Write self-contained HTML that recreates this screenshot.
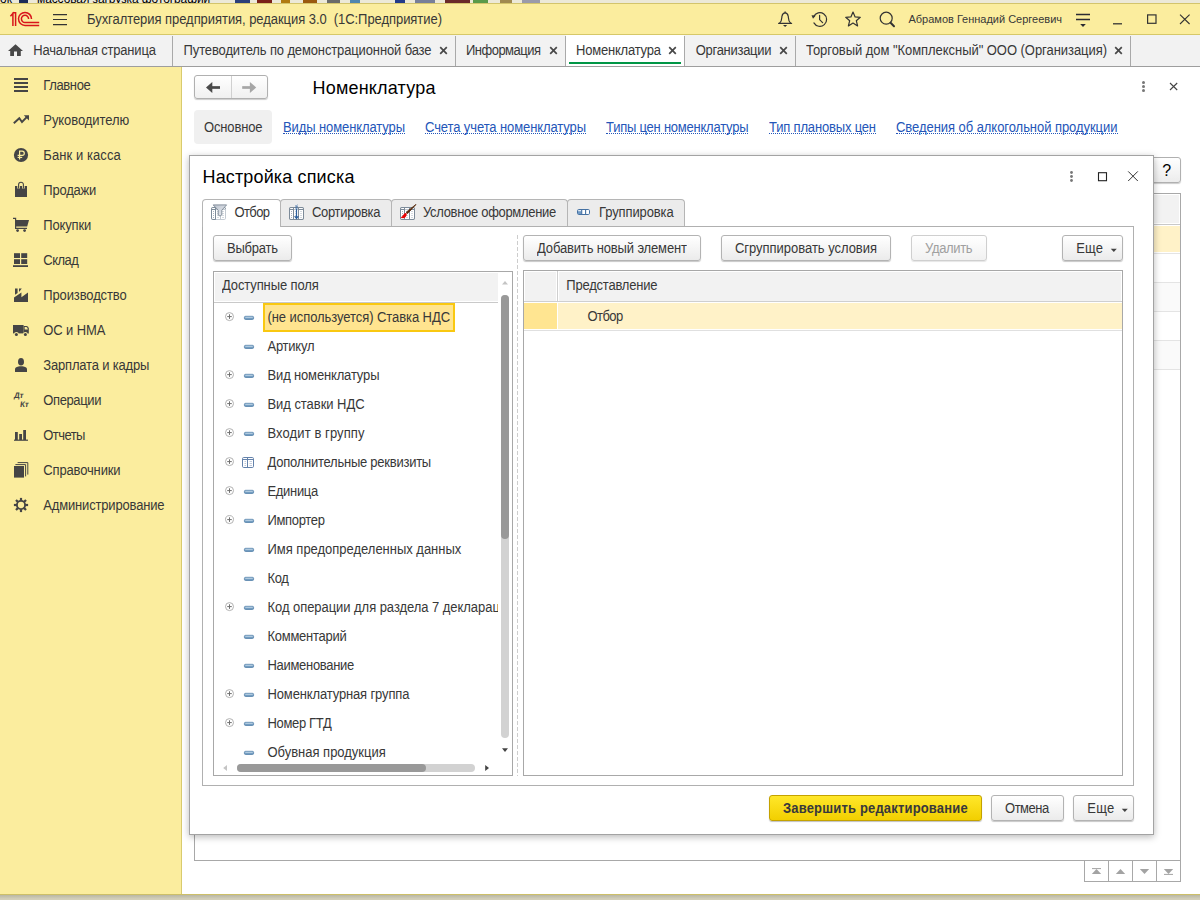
<!DOCTYPE html>
<html lang="ru">
<head>
<meta charset="utf-8">
<title>Номенклатура</title>
<style>
*{box-sizing:border-box;margin:0;padding:0}
html,body{width:1200px;height:900px;overflow:hidden;background:#fff}
body{font-family:"Liberation Sans",sans-serif;font-size:13px;color:#333;position:relative}
.abs{position:absolute}
svg.abs{overflow:visible}
.t{position:absolute;white-space:pre}
#os-top{left:0;top:0;width:1200px;height:3px;background:#ece9d8;overflow:hidden}
#os-top span{position:absolute;top:-8px;font-size:12px;line-height:14px;color:#000;white-space:nowrap}
#os-top i{position:absolute;top:0;height:3px}
#titlebar{left:0;top:3px;width:1200px;height:32px;background:#fbed9e;border-top:1px solid #d3c46c;border-bottom:1px solid #d6c868}
#tabbar{left:0;top:35px;width:1200px;height:32px;background:#f2f2f2;border-bottom:1px solid #9e9e9e}
.tsep{position:absolute;top:36px;width:1px;height:30px;background:#a9a9a9}
#sidebar{left:0;top:67px;width:182px;height:828px;background:#fbed9e;border-right:1px solid #d9cb6e}
#os-bottom{left:0;top:894px;width:1200px;height:6px;background:linear-gradient(#b9b7a4,#d3cfba 80%);border-top:1px solid #cdbf68}
</style>
</head>
<body>
<div id="os-top" class="abs"><span style="left:0px">ок</span><span style="left:37px;letter-spacing:-0.1px">массовая загрузка фотографий</span><i style="left:19px;width:9px;background:#1c2c58"></i><i style="left:235px;width:15px;background:#2b3f7a"></i><i style="left:257px;width:15px;background:#7a2018"></i><i style="left:281px;width:9px;background:#b07a10"></i><i style="left:303px;width:14px;background:#9a5a10"></i><i style="left:327px;width:13px;background:#6a6a6a"></i><i style="left:350px;width:10px;background:#4f86b0"></i><i style="left:395px;width:10px;background:#223a8a"></i><i style="left:415px;width:20px;background:#777f99"></i><i style="left:445px;width:25px;background:#6a2a2a"></i><i style="left:473px;width:15px;background:#5a9a4a"></i><i style="left:500px;width:12px;background:#a08a50"></i><i style="left:522px;width:18px;background:#9a9aaa"></i></div>
<div id="titlebar" class="abs"></div>
<svg class="abs" style="left:9px;top:10px;" width="32" height="18" viewBox="0 0 32 18"><g fill="none" stroke="#d8151b" stroke-width="1.5" stroke-linecap="butt"><path d="M1.4 6.2 L3.9 3.4 L3.9 16"/><path d="M3.6 2.75 L6.6 2.75 L6.6 16"/><path d="M22.5 9 A6.5 6.5 0 1 0 16 15.4 L30.2 15.4"/><path d="M19.6 9 A3.6 3.6 0 1 0 16 12.5 L30.2 12.5"/></g></svg>
<svg class="abs" style="left:52px;top:12px;" width="16" height="15" viewBox="0 0 16 15"><g stroke="#333" stroke-width="1.2"><path d="M1 2.6H15M1 7.5H15M1 12.6H15"/></g></svg>
<div class="t" style="left:87.00px;top:11.80px;font-size:13px;line-height:16px;letter-spacing:-0.054px;color:#383838;transform:scaleY(1.06);transform-origin:0 12.5px;">Бухгалтерия предприятия, редакция 3.0  (1С:Предприятие)</div>
<svg class="abs" style="left:776px;top:10px;" width="18" height="18" viewBox="0 0 18 18"><g fill="none" stroke="#333" stroke-width="1.2" stroke-linejoin="round" stroke-linecap="round"><path d="M2.6 13.3 H15.6"/><path d="M3.7 13 C6.3 10.8 5.6 7.6 6 6 C6.5 3.7 7.6 2.8 9.1 2.8 C10.6 2.8 11.7 3.7 12.2 6 C12.6 7.6 11.9 10.8 14.5 13"/><path d="M9.1 2.6 V1.9"/></g><path d="M7 15 H11.2 L9.1 17 Z" fill="#333"/></svg>
<svg class="abs" style="left:810px;top:10px;" width="18" height="18" viewBox="0 0 18 18"><g fill="none" stroke="#333" stroke-width="1.2" stroke-linejoin="round" stroke-linecap="round"><path d="M3.64 6.63 A6.8 6.8 0 1 1 3.91 12.9"/><path d="M9.6 5.4V9.6L12.6 12.6"/></g><path d="M1.5 5.2 L5.8 5.6 L3 8.8 Z" fill="#333"/></svg>
<svg class="abs" style="left:844px;top:10px;" width="18" height="18" viewBox="0 0 18 18"><g fill="none" stroke="#333" stroke-width="1.2" stroke-linejoin="round" stroke-linecap="round"><path d="M9 2 L11.1 6.9 L16.3 7.3 L12.3 10.7 L13.6 15.9 L9 13.1 L4.4 15.9 L5.7 10.7 L1.7 7.3 L6.9 6.9 Z"/></g></svg>
<svg class="abs" style="left:878px;top:10px;" width="18" height="18" viewBox="0 0 18 18"><g fill="none" stroke="#333" stroke-width="1.2" stroke-linejoin="round" stroke-linecap="round"><circle cx="8.2" cy="8.2" r="6"/><path d="M12.6 12.8 L16 16.2" stroke-width="2"/></g></svg>
<div class="t" style="left:908.50px;top:12.00px;font-size:11px;line-height:14px;letter-spacing:-0.008px;color:#383838;">Абрамов Геннадий Сергеевич</div>
<svg class="abs" style="left:1075px;top:11px;" width="16" height="18" viewBox="0 0 16 18"><g stroke="#2b2b33" stroke-width="1.3"><path d="M1 3.5H15M1 8.5H15"/></g><path d="M5.2 13 H10.8 L8 16 Z" fill="#2b2b33"/></svg>
<svg class="abs" style="left:1112px;top:11px;" width="12" height="16" viewBox="0 0 12 16"><path d="M1 12.8H10" stroke="#333" stroke-width="1.3"/></svg>
<svg class="abs" style="left:1146px;top:13px;" width="12" height="12" viewBox="0 0 12 12"><rect x="1.6" y="1.9" width="8.4" height="8.4" fill="none" stroke="#333" stroke-width="1.2"/></svg>
<svg class="abs" style="left:1179px;top:13px;" width="12" height="12" viewBox="0 0 12 12"><path d="M1 1.6 L10.6 11 M10.6 1.6 L1 11" stroke="#333" stroke-width="1.1"/></svg>
<div id="tabbar" class="abs"></div>
<div class="abs" style="left:566px;top:35px;width:118px;height:31px;background:#fff"></div>
<div class="abs" style="left:569px;top:62px;width:112px;height:2px;background:#009646"></div>
<div class="tsep" style="left:172px"></div>
<div class="tsep" style="left:455px"></div>
<div class="tsep" style="left:565px"></div>
<div class="tsep" style="left:684px"></div>
<div class="tsep" style="left:795px"></div>
<div class="tsep" style="left:1130px"></div>
<svg class="abs" style="left:7px;top:43px;" width="17" height="14" viewBox="0 0 17 14"><path d="M8.5 1.2 L1 8 H3.2 V13 H7 V8.4 H10 V13 H13.8 V8 H16 Z" fill="#484848"/></svg>
<div class="t" style="left:33.30px;top:42.80px;font-size:13px;line-height:16px;letter-spacing:-0.188px;color:#383838;transform:scaleY(1.06);transform-origin:0 12.5px;">Начальная страница</div>
<div class="t" style="left:183.60px;top:42.80px;font-size:13px;line-height:16px;letter-spacing:-0.131px;color:#383838;transform:scaleY(1.06);transform-origin:0 12.5px;">Путеводитель по демонстрационной базе</div>
<svg class="abs" style="left:439.4px;top:45.5px;" width="9" height="9" viewBox="0 0 9 9"><path d="M1.2 1.2 L7.8 7.8 M7.8 1.2 L1.2 7.8" stroke="#484848" stroke-width="1.7"/></svg>
<div class="t" style="left:466.00px;top:42.80px;font-size:13px;line-height:16px;letter-spacing:-0.511px;color:#383838;transform:scaleY(1.06);transform-origin:0 12.5px;">Информация</div>
<svg class="abs" style="left:549px;top:45.5px;" width="9" height="9" viewBox="0 0 9 9"><path d="M1.2 1.2 L7.8 7.8 M7.8 1.2 L1.2 7.8" stroke="#484848" stroke-width="1.7"/></svg>
<div class="t" style="left:576.00px;top:42.80px;font-size:13px;line-height:16px;letter-spacing:-0.209px;color:#383838;transform:scaleY(1.06);transform-origin:0 12.5px;">Номенклатура</div>
<svg class="abs" style="left:668px;top:45.5px;" width="9" height="9" viewBox="0 0 9 9"><path d="M1.2 1.2 L7.8 7.8 M7.8 1.2 L1.2 7.8" stroke="#484848" stroke-width="1.7"/></svg>
<div class="t" style="left:695.80px;top:42.80px;font-size:13px;line-height:16px;letter-spacing:-0.300px;color:#383838;transform:scaleY(1.06);transform-origin:0 12.5px;">Организации</div>
<svg class="abs" style="left:779.3px;top:45.5px;" width="9" height="9" viewBox="0 0 9 9"><path d="M1.2 1.2 L7.8 7.8 M7.8 1.2 L1.2 7.8" stroke="#484848" stroke-width="1.7"/></svg>
<div class="t" style="left:806.00px;top:42.80px;font-size:13px;line-height:16px;letter-spacing:-0.049px;color:#383838;transform:scaleY(1.06);transform-origin:0 12.5px;">Торговый дом "Комплексный" ООО (Организация)</div>
<svg class="abs" style="left:1114.3px;top:45.5px;" width="9" height="9" viewBox="0 0 9 9"><path d="M1.2 1.2 L7.8 7.8 M7.8 1.2 L1.2 7.8" stroke="#484848" stroke-width="1.7"/></svg>
<div id="sidebar" class="abs"></div>
<div class="t" style="left:43.30px;top:77.80px;font-size:13px;line-height:16px;letter-spacing:-0.367px;color:#383838;transform:scaleY(1.06);transform-origin:0 12.5px;">Главное</div>
<div class="t" style="left:43.30px;top:112.80px;font-size:13px;line-height:16px;letter-spacing:-0.073px;color:#383838;transform:scaleY(1.06);transform-origin:0 12.5px;">Руководителю</div>
<div class="t" style="left:43.30px;top:147.80px;font-size:13px;line-height:16px;letter-spacing:0.082px;color:#383838;transform:scaleY(1.06);transform-origin:0 12.5px;">Банк и касса</div>
<div class="t" style="left:43.30px;top:182.80px;font-size:13px;line-height:16px;letter-spacing:-0.217px;color:#383838;transform:scaleY(1.06);transform-origin:0 12.5px;">Продажи</div>
<div class="t" style="left:43.30px;top:217.80px;font-size:13px;line-height:16px;letter-spacing:-0.150px;color:#383838;transform:scaleY(1.06);transform-origin:0 12.5px;">Покупки</div>
<div class="t" style="left:43.30px;top:252.80px;font-size:13px;line-height:16px;letter-spacing:-0.525px;color:#383838;transform:scaleY(1.06);transform-origin:0 12.5px;">Склад</div>
<div class="t" style="left:43.30px;top:287.80px;font-size:13px;line-height:16px;letter-spacing:-0.127px;color:#383838;transform:scaleY(1.06);transform-origin:0 12.5px;">Производство</div>
<div class="t" style="left:43.30px;top:322.80px;font-size:13px;line-height:16px;letter-spacing:-0.100px;color:#383838;transform:scaleY(1.06);transform-origin:0 12.5px;">ОС и НМА</div>
<div class="t" style="left:43.30px;top:357.80px;font-size:13px;line-height:16px;letter-spacing:-0.180px;color:#383838;transform:scaleY(1.06);transform-origin:0 12.5px;">Зарплата и кадры</div>
<div class="t" style="left:43.30px;top:392.80px;font-size:13px;line-height:16px;letter-spacing:-0.386px;color:#383838;transform:scaleY(1.06);transform-origin:0 12.5px;">Операции</div>
<div class="t" style="left:43.30px;top:427.80px;font-size:13px;line-height:16px;letter-spacing:-0.560px;color:#383838;transform:scaleY(1.06);transform-origin:0 12.5px;">Отчеты</div>
<div class="t" style="left:43.30px;top:462.80px;font-size:13px;line-height:16px;letter-spacing:-0.150px;color:#383838;transform:scaleY(1.06);transform-origin:0 12.5px;">Справочники</div>
<div class="t" style="left:43.30px;top:497.80px;font-size:13px;line-height:16px;letter-spacing:-0.169px;color:#383838;transform:scaleY(1.06);transform-origin:0 12.5px;">Администрирование</div>
<svg class="abs" style="left:11px;top:75px;" width="20" height="20" viewBox="0 0 20 20"><g fill="#454545"><rect x="3" y="3" width="14" height="2"/><rect x="3" y="7" width="14" height="2"/><rect x="3" y="11" width="14" height="2"/><rect x="3" y="15" width="14" height="2"/></g></svg>
<svg class="abs" style="left:11px;top:110px;" width="20" height="20" viewBox="0 0 20 20"><path d="M2.8 13.3 L8.3 8.2 L11 12 L16 6.8" fill="none" stroke="#454545" stroke-width="1.9"/><path d="M12.8 5.3 H18 V10.4 Z" fill="#454545"/></svg>
<svg class="abs" style="left:11px;top:145px;" width="20" height="20" viewBox="0 0 20 20"><circle cx="10" cy="10" r="7.1" fill="#454545"/><g fill="none" stroke="#fbed9e" stroke-width="1.2"><path d="M8.6 14.6 V6.2 H11.2 A2.1 2.1 0 0 1 11.2 10.4 H6.6"/><path d="M6.6 12.4 H11.2"/></g></svg>
<svg class="abs" style="left:11px;top:180px;" width="20" height="20" viewBox="0 0 20 20"><path d="M4 6 H16 V17 H4 Z" fill="#454545"/><path d="M7.6 8.6 V4.6 A2.4 2.4 0 0 1 12.4 4.6 V8.6" fill="none" stroke="#fbed9e" stroke-width="2.6"/><path d="M7.6 8.4 V4.6 A2.4 2.4 0 0 1 12.4 4.6 V8.4" fill="none" stroke="#454545" stroke-width="1.1"/></svg>
<svg class="abs" style="left:11px;top:215px;" width="20" height="20" viewBox="0 0 20 20"><path d="M4.4 5 H18 L16.2 11.6 H4.4 Z" fill="#454545"/><path d="M2 3.4 H4.6 V13.4 H16" fill="none" stroke="#454545" stroke-width="1.2"/><circle cx="6.6" cy="15.6" r="1.4" fill="#454545"/><circle cx="13.6" cy="15.6" r="1.4" fill="#454545"/></svg>
<svg class="abs" style="left:11px;top:250px;" width="20" height="20" viewBox="0 0 20 20"><g fill="#454545"><rect x="3" y="3.2" width="6" height="4.8"/><rect x="10.2" y="3.2" width="6" height="4.8"/><rect x="3" y="9.2" width="6" height="4.8"/><rect x="10.2" y="9.2" width="6" height="4.8"/><rect x="2" y="15.2" width="15" height="1.8"/></g></svg>
<svg class="abs" style="left:11px;top:285px;" width="20" height="20" viewBox="0 0 20 20"><path d="M3 17 V12.4 L10.4 7.6 V12.2 L17 7.6 V17 Z" fill="#454545"/><path d="M4 3.4 H6.6 V8 L4 9.8 Z" fill="#454545"/><path d="M8 3.4 H10.8 L8 7 Z" fill="#454545"/></svg>
<svg class="abs" style="left:11px;top:320px;" width="20" height="20" viewBox="0 0 20 20"><path d="M2 5 H12.6 V13.4 H2 Z" fill="#454545"/><path d="M12.6 6 H15.6 Q17.6 6 17.8 8.6 V13.4 H12.6 Z" fill="#454545"/><path d="M13.6 7 H15.4 Q16.6 7.2 16.8 9.4 H13.6 Z" fill="#fbed9e"/><circle cx="5.4" cy="14.2" r="2.3" fill="#fbed9e"/><circle cx="14.4" cy="14.2" r="2.3" fill="#fbed9e"/><circle cx="5.4" cy="14.4" r="1.5" fill="#454545"/><circle cx="14.4" cy="14.4" r="1.5" fill="#454545"/></svg>
<svg class="abs" style="left:11px;top:355px;" width="20" height="20" viewBox="0 0 20 20"><ellipse cx="10" cy="6.7" rx="3" ry="3.8" fill="#454545"/><path d="M4 17 V14.4 Q4 12.2 7.4 11.6 L8.6 11.2 H11.4 L12.6 11.6 Q16 12.2 16 14.4 V17 Z" fill="#454545"/></svg>
<svg class="abs" style="left:11px;top:425px;" width="20" height="20" viewBox="0 0 20 20"><g fill="#454545"><rect x="4" y="7" width="2.8" height="8"/><rect x="8.2" y="9" width="2.8" height="6"/><rect x="12.2" y="5" width="2.8" height="10"/><rect x="3" y="14.6" width="14" height="1.2"/></g></svg>
<svg class="abs" style="left:11px;top:460px;" width="20" height="20" viewBox="0 0 20 20"><rect x="3" y="6" width="10" height="11.6" fill="#454545"/><path d="M4.4 4.6 H14.6 V16.4 M6.6 2.6 H16.8 V14.6" fill="none" stroke="#454545" stroke-width="1"/></svg>
<svg class="abs" style="left:11px;top:495px;" width="20" height="20" viewBox="0 0 20 20"><g fill="#454545"><rect x="8.9" y="2.9" width="2.2" height="3" transform="rotate(0 10 10)"/><rect x="8.9" y="2.9" width="2.2" height="3" transform="rotate(45 10 10)"/><rect x="8.9" y="2.9" width="2.2" height="3" transform="rotate(90 10 10)"/><rect x="8.9" y="2.9" width="2.2" height="3" transform="rotate(135 10 10)"/><rect x="8.9" y="2.9" width="2.2" height="3" transform="rotate(180 10 10)"/><rect x="8.9" y="2.9" width="2.2" height="3" transform="rotate(225 10 10)"/><rect x="8.9" y="2.9" width="2.2" height="3" transform="rotate(270 10 10)"/><rect x="8.9" y="2.9" width="2.2" height="3" transform="rotate(315 10 10)"/></g><circle cx="10" cy="10" r="4.1" fill="none" stroke="#454545" stroke-width="1.9"/></svg>
<div class="t" style="left:13.5px;top:391px;font-size:8px;line-height:10px;font-weight:bold;color:#454545;letter-spacing:-0.1px;transform:skewX(-8deg)">Дт</div>
<div class="t" style="left:19.7px;top:400px;font-size:8px;line-height:10px;font-weight:bold;color:#454545;letter-spacing:-0.1px;transform:skewX(-8deg)">Кт</div>
<div class="abs" style="left:194px;top:75px;width:74px;height:24px;border:1px solid #b0b0b0;border-radius:3px;background:linear-gradient(#fff,#f0f0f0);box-shadow:0 1px 1px rgba(0,0,0,.2)"></div>
<div class="abs" style="left:231px;top:76px;width:1px;height:22px;background:#d0d0d0"></div>
<svg class="abs" style="left:205px;top:81px;" width="16" height="13" viewBox="0 0 16 13"><path d="M15 6.5 H5" stroke="#4a4a4a" stroke-width="2.7"/><path d="M7.3 1 L1 6.5 L7.3 12 Z" fill="#4a4a4a"/></svg>
<svg class="abs" style="left:241px;top:81px;" width="16" height="13" viewBox="0 0 16 13"><path d="M1.2 6.5 H11" stroke="#a6a6a6" stroke-width="2.7"/><path d="M8.9 1 L15.2 6.5 L8.9 12 Z" fill="#a6a6a6"/></svg>
<div class="t" style="left:312.50px;top:77.50px;font-size:18px;line-height:21px;letter-spacing:0.191px;color:#000;transform:scaleY(1.06);transform-origin:0 16.5px;">Номенклатура</div>
<svg class="abs" style="left:1139px;top:79px;" width="9" height="15" viewBox="0 0 9 15"><g fill="#777"><circle cx="4.5" cy="3.4" r="1.5"/><circle cx="4.5" cy="7.5" r="1.5"/><circle cx="4.5" cy="11.6" r="1.5"/></g></svg>
<svg class="abs" style="left:1168px;top:81px;" width="12" height="12" viewBox="0 0 12 12"><path d="M2 2 L9.2 9 M9.2 2 L2 9" stroke="#444" stroke-width="1.1"/></svg>
<div class="abs" style="left:194px;top:110px;width:78px;height:34px;background:#f0f0f0;border-radius:4px"></div>
<div class="t" style="left:204.00px;top:119.80px;font-size:13px;line-height:16px;letter-spacing:-0.157px;color:#383838;transform:scaleY(1.06);transform-origin:0 12.5px;">Основное</div>
<div class="t" style="left:283.00px;top:119.80px;font-size:13px;line-height:16px;letter-spacing:-0.100px;color:#2456b9;transform:scaleY(1.06);transform-origin:0 12.5px;">Виды номенклатуры</div>
<div class="abs" style="left:283px;top:133px;width:122px;height:1px;border-top:1px dotted #2456b9"></div>
<div class="t" style="left:425.00px;top:119.80px;font-size:13px;line-height:16px;letter-spacing:-0.100px;color:#2456b9;transform:scaleY(1.06);transform-origin:0 12.5px;">Счета учета номенклатуры</div>
<div class="abs" style="left:425px;top:133px;width:161px;height:1px;border-top:1px dotted #2456b9"></div>
<div class="t" style="left:606.00px;top:119.80px;font-size:13px;line-height:16px;letter-spacing:-0.230px;color:#2456b9;transform:scaleY(1.06);transform-origin:0 12.5px;">Типы цен номенклатуры</div>
<div class="abs" style="left:606px;top:133px;width:142px;height:1px;border-top:1px dotted #2456b9"></div>
<div class="t" style="left:769.00px;top:119.80px;font-size:13px;line-height:16px;letter-spacing:-0.173px;color:#2456b9;transform:scaleY(1.06);transform-origin:0 12.5px;">Тип плановых цен</div>
<div class="abs" style="left:769px;top:133px;width:107px;height:1px;border-top:1px dotted #2456b9"></div>
<div class="t" style="left:896.00px;top:119.80px;font-size:13px;line-height:16px;letter-spacing:-0.053px;color:#2456b9;transform:scaleY(1.06);transform-origin:0 12.5px;">Сведения об алкогольной продукции</div>
<div class="abs" style="left:896px;top:133px;width:222px;height:1px;border-top:1px dotted #2456b9"></div>
<div class="abs" style="left:194px;top:193px;width:987px;height:668px;border:1px solid #a8a8a8;background:#fff"></div>
<div class="abs" style="left:195px;top:194px;width:985px;height:30px;background:#f2f2f2;border:1px solid #fff"></div>
<div class="abs" style="left:195px;top:224px;width:985px;height:1px;background:#c9c9c9"></div>
<div class="abs" style="left:195px;top:226px;width:985px;height:26px;background:#fff2c8"></div>
<div class="abs" style="left:195px;top:253px;width:985px;height:1px;background:#e4e4e4"></div>
<div class="abs" style="left:195px;top:282px;width:985px;height:1px;background:#e4e4e4"></div>
<div class="abs" style="left:195px;top:311px;width:985px;height:1px;background:#e4e4e4"></div>
<div class="abs" style="left:195px;top:340px;width:985px;height:1px;background:#e4e4e4"></div>
<div class="abs" style="left:195px;top:369px;width:985px;height:1px;background:#e4e4e4"></div>
<div class="abs" style="left:195px;top:283px;width:985px;height:28px;background:#fafafa"></div>
<div class="abs" style="left:195px;top:341px;width:985px;height:28px;background:#fafafa"></div>
<div class="abs" style="left:1148px;top:157px;width:33px;height:26px;border:1px solid #b0b0b0;border-radius:3px;background:linear-gradient(#fff,#ececec);box-shadow:0 1px 1px rgba(0,0,0,.2)"></div>
<div class="t" style="left:1162.20px;top:161.40px;font-size:16px;line-height:19px;color:#000;">?</div>
<div class="abs" style="left:1084px;top:860px;width:97px;height:22px;border:1px solid #a8a8a8;background:#fff"></div>
<div class="abs" style="left:1108px;top:861px;width:1px;height:20px;background:#a8a8a8"></div>
<div class="abs" style="left:1132px;top:861px;width:1px;height:20px;background:#a8a8a8"></div>
<div class="abs" style="left:1156px;top:861px;width:1px;height:20px;background:#a8a8a8"></div>
<svg class="abs" style="left:1089px;top:865px;" width="15" height="12" viewBox="0 0 15 12"><path d="M3 3.6 H12" stroke="#a3a3a3" stroke-width="1"/><path d="M7.5 4 L12.2 9 H2.8 Z" fill="#a3a3a3"/></svg>
<svg class="abs" style="left:1113px;top:865px;" width="15" height="12" viewBox="0 0 15 12"><path d="M7.5 4 L12.2 9 H2.8 Z" fill="#a3a3a3"/></svg>
<svg class="abs" style="left:1137px;top:865px;" width="15" height="12" viewBox="0 0 15 12"><path d="M7.5 9 L12.2 4 H2.8 Z" fill="#a3a3a3"/></svg>
<svg class="abs" style="left:1161px;top:865px;" width="15" height="12" viewBox="0 0 15 12"><path d="M3 9.4 H12" stroke="#a3a3a3" stroke-width="1"/><path d="M7.5 9 L12.2 4 H2.8 Z" fill="#a3a3a3"/></svg>
<div class="abs" style="left:189px;top:155px;width:965px;height:680px;border:1px solid #a3a3a3;background:#fff;box-shadow:0 2px 7px rgba(0,0,0,.28)"></div>
<div class="t" style="left:202.50px;top:166.50px;font-size:18px;line-height:21px;letter-spacing:0.147px;color:#000;transform:scaleY(1.06);transform-origin:0 16.5px;">Настройка списка</div>
<svg class="abs" style="left:1067px;top:169px;" width="9" height="15" viewBox="0 0 9 15"><g fill="#777"><circle cx="4.5" cy="3.5" r="1.4"/><circle cx="4.5" cy="7.5" r="1.4"/><circle cx="4.5" cy="11.5" r="1.4"/></g></svg>
<svg class="abs" style="left:1096px;top:170px;" width="13" height="13" viewBox="0 0 13 13"><rect x="2.5" y="2.7" width="8" height="8" fill="none" stroke="#222" stroke-width="1.1"/></svg>
<svg class="abs" style="left:1126px;top:169px;" width="14" height="14" viewBox="0 0 14 14"><path d="M2.2 2.4 L11.8 12 M11.8 2.4 L2.2 12" stroke="#333" stroke-width="1"/></svg>
<div class="abs" style="left:202px;top:226px;width:932px;height:560px;border:1px solid #b0b0b0;background:#fff"></div>
<div class="abs" style="left:280px;top:199px;width:112px;height:27px;border:1px solid #b5b5b5;border-bottom:none;border-radius:4px 4px 0 0;background:#ececec"></div>
<div class="abs" style="left:391px;top:199px;width:177px;height:27px;border:1px solid #b5b5b5;border-bottom:none;border-radius:4px 4px 0 0;background:#ececec"></div>
<div class="abs" style="left:567px;top:199px;width:118px;height:27px;border:1px solid #b5b5b5;border-bottom:none;border-radius:4px 4px 0 0;background:#ececec"></div>
<div class="abs" style="left:202px;top:199px;width:79px;height:28px;border:1px solid #b5b5b5;border-bottom:none;border-radius:4px 4px 0 0;background:#fff"></div>
<div class="t" style="left:234.50px;top:205.20px;font-size:13px;line-height:16px;letter-spacing:-0.625px;color:#383838;transform:scaleY(1.06);transform-origin:0 12.5px;">Отбор</div>
<div class="t" style="left:312.00px;top:205.20px;font-size:13px;line-height:16px;letter-spacing:-0.322px;color:#383838;transform:scaleY(1.06);transform-origin:0 12.5px;">Сортировка</div>
<div class="t" style="left:423.00px;top:205.20px;font-size:13px;line-height:16px;letter-spacing:-0.311px;color:#383838;transform:scaleY(1.06);transform-origin:0 12.5px;">Условное оформление</div>
<div class="t" style="left:599.00px;top:205.20px;font-size:13px;line-height:16px;letter-spacing:-0.110px;color:#383838;transform:scaleY(1.06);transform-origin:0 12.5px;">Группировка</div>
<svg class="abs" style="left:211px;top:203.5px;" width="16" height="16" viewBox="0 0 16 16"><defs><linearGradient id="fg" x1="0" y1="0" x2="1" y2="1"><stop offset="0" stop-color="#b9c1cc"/><stop offset="1" stop-color="#eef0f4"/></linearGradient></defs><rect x="0.5" y="3.5" width="14" height="12" rx="1.2" fill="#fff" stroke="#c3cad2"/><path d="M1 5.5H14" stroke="#c3cad2"/><path d="M4.5 4V15M9.5 4V15" stroke="#c3cad2"/><path d="M14.5 4.7 Q14.5 3.5 13.3 3.5 H1.7 Q0.5 3.5 0.5 4.7 V14.3 Q0.5 15.5 1.7 15.5 H4.5 V3.5" fill="none" stroke="#7d8b99"/><path d="M1 5.5H4.5" stroke="#7d8b99"/><path d="M2.5 7V14M7 7V14M12 7V14" stroke="#aab4c0" stroke-width="1" stroke-dasharray="1 1"/><path d="M2.2 0.9 H15.6 L10.8 6.2 V11 L9 12 L7.2 11 V6.2 Z" fill="url(#fg)" stroke="#7a8794" stroke-width=".9" stroke-linejoin="round"/></svg>
<svg class="abs" style="left:289px;top:203.5px;" width="16" height="16" viewBox="0 0 16 16"><rect x="0.5" y="3.5" width="14" height="12" rx="1.2" fill="#fff" stroke="#7d8b99"/><path d="M1 5.5H14" stroke="#c3cad2"/><path d="M4.5 4V15M9.5 4V15" stroke="#c3cad2"/><path d="M14.5 4.7 Q14.5 3.5 13.3 3.5 H1.7 Q0.5 3.5 0.5 4.7 V14.3 Q0.5 15.5 1.7 15.5 H4.5 V3.5" fill="none" stroke="#7d8b99"/><path d="M1 5.5H4.5" stroke="#7d8b99"/><path d="M9.5 3.5 V15.5 H13.3 Q14.5 15.5 14.5 14.3 V4.7" fill="none" stroke="#7d8b99"/><path d="M10 5.5H14.5" stroke="#7d8b99"/><path d="M2.5 7V14M7 7V14M12 7V14" stroke="#aab4c0" stroke-width="1" stroke-dasharray="1 1"/><rect x="5.4" y="2" width="4.2" height="14" fill="#fff" opacity=".0"/><path d="M6.5 1 L8.5 3 M8.5 1 L6.5 3 M6.5 3 L8.5 5 M8.5 3 L6.5 5" stroke="#2b5f9e" stroke-width="1" stroke-dasharray="1 .5"/><path d="M7.5 5V13" stroke="#2b5f9e" stroke-width="1.2"/><path d="M5 12.2 H10 L7.5 15.6 Z" fill="#2b5f9e"/></svg>
<svg class="abs" style="left:400px;top:203.5px;" width="16" height="16" viewBox="0 0 16 16"><rect x="0.5" y="3.5" width="14" height="12" rx="1.2" fill="#fff" stroke="#7d8b99"/><path d="M1 5.5H14" stroke="#c3cad2"/><path d="M4.5 4V15M9.5 4V15" stroke="#c3cad2"/><path d="M14.5 4.7 Q14.5 3.5 13.3 3.5 H1.7 Q0.5 3.5 0.5 4.7 V14.3 Q0.5 15.5 1.7 15.5 H4.5 V3.5" fill="none" stroke="#7d8b99"/><path d="M1 5.5H4.5" stroke="#7d8b99"/><path d="M9.5 3.5 V15.5 H13.3 Q14.5 15.5 14.5 14.3 V4.7" fill="none" stroke="#7d8b99"/><path d="M10 5.5H14.5" stroke="#7d8b99"/><path d="M2.5 7V14M7 7V14M12 7V14" stroke="#aab4c0" stroke-width="1" stroke-dasharray="1 1"/><path d="M16 0.4 L7.6 9.6 L6.2 8.2 Z" fill="#55280a" stroke="#55280a" stroke-width=".8" stroke-linejoin="round"/><path d="M6.6 9.2 Q4.4 8.6 3.4 10.8 Q2.6 12.6 0.6 13.6 Q3.8 15 5.6 13 Q7.2 11.2 6.6 9.2 Z" fill="#e80000"/></svg>
<svg class="abs" style="left:577px;top:209px;" width="13" height="6" viewBox="0 0 13 6"><rect x="0.5" y="0.5" width="12" height="5" rx="1.2" fill="#fff" stroke="#4672a3"/><rect x="1" y="1" width="3.4" height="4" fill="#6f9ac6"/><rect x="1.2" y="1.2" width="3" height="1" fill="#fff"/><path d="M4.7 0.5V5.5M8.6 0.5V5.5" stroke="#4672a3" stroke-width="1.1"/></svg>
<div class="abs" style="left:213px;top:235px;width:79px;height:26px;border:1px solid #b3b3b3;border-radius:3px;background:linear-gradient(#ffffff,#ebebeb);box-shadow:0 1px 1px rgba(0,0,0,.22)"></div>
<div class="t" style="left:227.00px;top:240.60px;font-size:13px;line-height:16px;letter-spacing:-0.233px;color:#383838;transform:scaleY(1.06);transform-origin:0 12.5px;">Выбрать</div>
<div class="abs" style="left:213px;top:271px;width:300px;height:505px;border:1px solid #a8a8a8;background:#fff"></div>
<div class="abs" style="left:214px;top:272px;width:285px;height:29px;background:#f2f2f2;border:1px solid #fff;border-bottom:none"></div>
<div class="abs" style="left:214px;top:302px;width:284px;height:1px;background:#c9c9c9"></div>
<div class="t" style="left:222.00px;top:278.40px;font-size:13px;line-height:16px;letter-spacing:-0.119px;color:#383838;transform:scaleY(1.06);transform-origin:0 12.5px;">Доступные поля</div>
<div class="abs" style="left:263px;top:303px;width:192px;height:29px;background:#ffe48f;border:2px solid #f9c811"></div>
<div class="abs" style="left:214px;top:303px;width:284px;height:461px;overflow:hidden">
<div class="abs" style="left:-214px;top:-303px;width:0;height:0"><div class="t" style="left:267.50px;top:309.80px;font-size:13px;line-height:16px;letter-spacing:-0.070px;color:#383838;transform:scaleY(1.06);transform-origin:0 12.5px;">(не используется) Ставка НДС</div><svg class="abs" style="left:224px;top:312px;" width="11" height="11" viewBox="0 0 11 11"><circle cx="5.5" cy="4.6" r="4" fill="#fff" stroke="#b2b2b2" stroke-width="1"/><path d="M3.2 4.6H7.8M5.5 2.3V6.9" stroke="#707070" stroke-width="1"/></svg><svg class="abs" style="left:244px;top:315px;" width="10" height="5" viewBox="0 0 10 5"><rect x="0.4" y="1.3" width="9.2" height="3.2" rx="1.2" fill="#739dc1" stroke="#5482aa" stroke-width=".8"/><rect x="1.2" y="1.8" width="7.6" height="1" rx=".5" fill="#c3d7e8"/></svg><div class="t" style="left:267.50px;top:338.80px;font-size:13px;line-height:16px;letter-spacing:-0.250px;color:#383838;transform:scaleY(1.06);transform-origin:0 12.5px;">Артикул</div><svg class="abs" style="left:244px;top:344px;" width="10" height="5" viewBox="0 0 10 5"><rect x="0.4" y="1.3" width="9.2" height="3.2" rx="1.2" fill="#739dc1" stroke="#5482aa" stroke-width=".8"/><rect x="1.2" y="1.8" width="7.6" height="1" rx=".5" fill="#c3d7e8"/></svg><div class="t" style="left:267.50px;top:367.80px;font-size:13px;line-height:16px;letter-spacing:-0.153px;color:#383838;transform:scaleY(1.06);transform-origin:0 12.5px;">Вид номенклатуры</div><svg class="abs" style="left:224px;top:370px;" width="11" height="11" viewBox="0 0 11 11"><circle cx="5.5" cy="4.6" r="4" fill="#fff" stroke="#b2b2b2" stroke-width="1"/><path d="M3.2 4.6H7.8M5.5 2.3V6.9" stroke="#707070" stroke-width="1"/></svg><svg class="abs" style="left:244px;top:373px;" width="10" height="5" viewBox="0 0 10 5"><rect x="0.4" y="1.3" width="9.2" height="3.2" rx="1.2" fill="#739dc1" stroke="#5482aa" stroke-width=".8"/><rect x="1.2" y="1.8" width="7.6" height="1" rx=".5" fill="#c3d7e8"/></svg><div class="t" style="left:267.50px;top:396.80px;font-size:13px;line-height:16px;letter-spacing:-0.054px;color:#383838;transform:scaleY(1.06);transform-origin:0 12.5px;">Вид ставки НДС</div><svg class="abs" style="left:224px;top:399px;" width="11" height="11" viewBox="0 0 11 11"><circle cx="5.5" cy="4.6" r="4" fill="#fff" stroke="#b2b2b2" stroke-width="1"/><path d="M3.2 4.6H7.8M5.5 2.3V6.9" stroke="#707070" stroke-width="1"/></svg><svg class="abs" style="left:244px;top:402px;" width="10" height="5" viewBox="0 0 10 5"><rect x="0.4" y="1.3" width="9.2" height="3.2" rx="1.2" fill="#739dc1" stroke="#5482aa" stroke-width=".8"/><rect x="1.2" y="1.8" width="7.6" height="1" rx=".5" fill="#c3d7e8"/></svg><div class="t" style="left:267.50px;top:425.80px;font-size:13px;line-height:16px;letter-spacing:0.093px;color:#383838;transform:scaleY(1.06);transform-origin:0 12.5px;">Входит в группу</div><svg class="abs" style="left:224px;top:428px;" width="11" height="11" viewBox="0 0 11 11"><circle cx="5.5" cy="4.6" r="4" fill="#fff" stroke="#b2b2b2" stroke-width="1"/><path d="M3.2 4.6H7.8M5.5 2.3V6.9" stroke="#707070" stroke-width="1"/></svg><svg class="abs" style="left:244px;top:431px;" width="10" height="5" viewBox="0 0 10 5"><rect x="0.4" y="1.3" width="9.2" height="3.2" rx="1.2" fill="#739dc1" stroke="#5482aa" stroke-width=".8"/><rect x="1.2" y="1.8" width="7.6" height="1" rx=".5" fill="#c3d7e8"/></svg><div class="t" style="left:267.50px;top:454.80px;font-size:13px;line-height:16px;letter-spacing:-0.246px;color:#383838;transform:scaleY(1.06);transform-origin:0 12.5px;">Дополнительные реквизиты</div><svg class="abs" style="left:224px;top:457px;" width="11" height="11" viewBox="0 0 11 11"><circle cx="5.5" cy="4.6" r="4" fill="#fff" stroke="#b2b2b2" stroke-width="1"/><path d="M3.2 4.6H7.8M5.5 2.3V6.9" stroke="#707070" stroke-width="1"/></svg><svg class="abs" style="left:241px;top:456px;" width="14" height="13" viewBox="0 0 14 13"><rect x="1.5" y="1.5" width="11" height="10" rx="1.2" fill="#fff" stroke="#6482ab" stroke-width="1"/><path d="M2 3.5H12M6.5 2V11" stroke="#6482ab" stroke-width="1"/><path d="M3.5 5.5H5M3.5 7.5H5M3.5 9.5H5M8.5 5.5H11M8.5 7.5H11M8.5 9.5H11" stroke="#c3ccdc" stroke-width="1"/></svg><div class="t" style="left:267.50px;top:483.80px;font-size:13px;line-height:16px;letter-spacing:-0.325px;color:#383838;transform:scaleY(1.06);transform-origin:0 12.5px;">Единица</div><svg class="abs" style="left:224px;top:486px;" width="11" height="11" viewBox="0 0 11 11"><circle cx="5.5" cy="4.6" r="4" fill="#fff" stroke="#b2b2b2" stroke-width="1"/><path d="M3.2 4.6H7.8M5.5 2.3V6.9" stroke="#707070" stroke-width="1"/></svg><svg class="abs" style="left:244px;top:489px;" width="10" height="5" viewBox="0 0 10 5"><rect x="0.4" y="1.3" width="9.2" height="3.2" rx="1.2" fill="#739dc1" stroke="#5482aa" stroke-width=".8"/><rect x="1.2" y="1.8" width="7.6" height="1" rx=".5" fill="#c3d7e8"/></svg><div class="t" style="left:267.50px;top:512.80px;font-size:13px;line-height:16px;letter-spacing:-0.329px;color:#383838;transform:scaleY(1.06);transform-origin:0 12.5px;">Импортер</div><svg class="abs" style="left:224px;top:515px;" width="11" height="11" viewBox="0 0 11 11"><circle cx="5.5" cy="4.6" r="4" fill="#fff" stroke="#b2b2b2" stroke-width="1"/><path d="M3.2 4.6H7.8M5.5 2.3V6.9" stroke="#707070" stroke-width="1"/></svg><svg class="abs" style="left:244px;top:518px;" width="10" height="5" viewBox="0 0 10 5"><rect x="0.4" y="1.3" width="9.2" height="3.2" rx="1.2" fill="#739dc1" stroke="#5482aa" stroke-width=".8"/><rect x="1.2" y="1.8" width="7.6" height="1" rx=".5" fill="#c3d7e8"/></svg><div class="t" style="left:267.50px;top:541.80px;font-size:13px;line-height:16px;letter-spacing:-0.017px;color:#383838;transform:scaleY(1.06);transform-origin:0 12.5px;">Имя предопределенных данных</div><svg class="abs" style="left:244px;top:547px;" width="10" height="5" viewBox="0 0 10 5"><rect x="0.4" y="1.3" width="9.2" height="3.2" rx="1.2" fill="#739dc1" stroke="#5482aa" stroke-width=".8"/><rect x="1.2" y="1.8" width="7.6" height="1" rx=".5" fill="#c3d7e8"/></svg><div class="t" style="left:267.50px;top:570.80px;font-size:13px;line-height:16px;letter-spacing:-0.425px;color:#383838;transform:scaleY(1.06);transform-origin:0 12.5px;">Код</div><svg class="abs" style="left:244px;top:576px;" width="10" height="5" viewBox="0 0 10 5"><rect x="0.4" y="1.3" width="9.2" height="3.2" rx="1.2" fill="#739dc1" stroke="#5482aa" stroke-width=".8"/><rect x="1.2" y="1.8" width="7.6" height="1" rx=".5" fill="#c3d7e8"/></svg><div class="t" style="left:267.50px;top:599.80px;font-size:13px;line-height:16px;color:#383838;transform:scaleY(1.06);transform-origin:0 12.5px;letter-spacing:-0.052px;">Код операции для раздела 7 декларации по НДС</div><svg class="abs" style="left:224px;top:602px;" width="11" height="11" viewBox="0 0 11 11"><circle cx="5.5" cy="4.6" r="4" fill="#fff" stroke="#b2b2b2" stroke-width="1"/><path d="M3.2 4.6H7.8M5.5 2.3V6.9" stroke="#707070" stroke-width="1"/></svg><svg class="abs" style="left:244px;top:605px;" width="10" height="5" viewBox="0 0 10 5"><rect x="0.4" y="1.3" width="9.2" height="3.2" rx="1.2" fill="#739dc1" stroke="#5482aa" stroke-width=".8"/><rect x="1.2" y="1.8" width="7.6" height="1" rx=".5" fill="#c3d7e8"/></svg><div class="t" style="left:267.50px;top:628.80px;font-size:13px;line-height:16px;letter-spacing:-0.265px;color:#383838;transform:scaleY(1.06);transform-origin:0 12.5px;">Комментарий</div><svg class="abs" style="left:244px;top:634px;" width="10" height="5" viewBox="0 0 10 5"><rect x="0.4" y="1.3" width="9.2" height="3.2" rx="1.2" fill="#739dc1" stroke="#5482aa" stroke-width=".8"/><rect x="1.2" y="1.8" width="7.6" height="1" rx=".5" fill="#c3d7e8"/></svg><div class="t" style="left:267.50px;top:657.80px;font-size:13px;line-height:16px;letter-spacing:-0.305px;color:#383838;transform:scaleY(1.06);transform-origin:0 12.5px;">Наименование</div><svg class="abs" style="left:244px;top:663px;" width="10" height="5" viewBox="0 0 10 5"><rect x="0.4" y="1.3" width="9.2" height="3.2" rx="1.2" fill="#739dc1" stroke="#5482aa" stroke-width=".8"/><rect x="1.2" y="1.8" width="7.6" height="1" rx=".5" fill="#c3d7e8"/></svg><div class="t" style="left:267.50px;top:686.80px;font-size:13px;line-height:16px;letter-spacing:-0.140px;color:#383838;transform:scaleY(1.06);transform-origin:0 12.5px;">Номенклатурная группа</div><svg class="abs" style="left:224px;top:689px;" width="11" height="11" viewBox="0 0 11 11"><circle cx="5.5" cy="4.6" r="4" fill="#fff" stroke="#b2b2b2" stroke-width="1"/><path d="M3.2 4.6H7.8M5.5 2.3V6.9" stroke="#707070" stroke-width="1"/></svg><svg class="abs" style="left:244px;top:692px;" width="10" height="5" viewBox="0 0 10 5"><rect x="0.4" y="1.3" width="9.2" height="3.2" rx="1.2" fill="#739dc1" stroke="#5482aa" stroke-width=".8"/><rect x="1.2" y="1.8" width="7.6" height="1" rx=".5" fill="#c3d7e8"/></svg><div class="t" style="left:267.50px;top:715.80px;font-size:13px;line-height:16px;letter-spacing:-0.344px;color:#383838;transform:scaleY(1.06);transform-origin:0 12.5px;">Номер ГТД</div><svg class="abs" style="left:224px;top:718px;" width="11" height="11" viewBox="0 0 11 11"><circle cx="5.5" cy="4.6" r="4" fill="#fff" stroke="#b2b2b2" stroke-width="1"/><path d="M3.2 4.6H7.8M5.5 2.3V6.9" stroke="#707070" stroke-width="1"/></svg><svg class="abs" style="left:244px;top:721px;" width="10" height="5" viewBox="0 0 10 5"><rect x="0.4" y="1.3" width="9.2" height="3.2" rx="1.2" fill="#739dc1" stroke="#5482aa" stroke-width=".8"/><rect x="1.2" y="1.8" width="7.6" height="1" rx=".5" fill="#c3d7e8"/></svg><div class="t" style="left:267.50px;top:744.80px;font-size:13px;line-height:16px;letter-spacing:-0.016px;color:#383838;transform:scaleY(1.06);transform-origin:0 12.5px;">Обувная продукция</div><svg class="abs" style="left:244px;top:750px;" width="10" height="5" viewBox="0 0 10 5"><rect x="0.4" y="1.3" width="9.2" height="3.2" rx="1.2" fill="#739dc1" stroke="#5482aa" stroke-width=".8"/><rect x="1.2" y="1.8" width="7.6" height="1" rx=".5" fill="#c3d7e8"/></svg></div></div>
<div class="abs" style="left:501px;top:295px;width:8px;height:443px;background:#d2d2d2;border-radius:4px"></div>
<div class="abs" style="left:501px;top:295px;width:8px;height:244px;background:#999;border-radius:4px"></div>
<svg class="abs" style="left:501px;top:280px;" width="8" height="6" viewBox="0 0 8 6"><path d="M4 1 L7 4.6 H1 Z" fill="#c4c4c4"/></svg>
<svg class="abs" style="left:501px;top:747px;" width="8" height="6" viewBox="0 0 8 6"><path d="M4 5 L7 1.2 H1 Z" fill="#444"/></svg>
<div class="abs" style="left:237px;top:764px;width:238px;height:8px;background:#d2d2d2;border-radius:4px"></div>
<div class="abs" style="left:237px;top:764px;width:189px;height:8px;background:#999;border-radius:4px"></div>
<svg class="abs" style="left:222px;top:764px;" width="6" height="8" viewBox="0 0 6 8"><path d="M1.2 4 L5 1 V7 Z" fill="#c4c4c4"/></svg>
<svg class="abs" style="left:484px;top:764px;" width="6" height="8" viewBox="0 0 6 8"><path d="M5 4 L1.2 1 V7 Z" fill="#444"/></svg>
<div class="abs" style="left:517px;top:235px;width:1px;height:541px;background:repeating-linear-gradient(to bottom,#cdcdcd 0,#cdcdcd 4px,transparent 4px,transparent 6px)"></div>
<div class="abs" style="left:523px;top:235px;width:178px;height:26px;border:1px solid #b3b3b3;border-radius:3px;background:linear-gradient(#ffffff,#ebebeb);box-shadow:0 1px 1px rgba(0,0,0,.22)"></div>
<div class="t" style="left:537.00px;top:240.60px;font-size:13px;line-height:16px;letter-spacing:-0.148px;color:#383838;transform:scaleY(1.06);transform-origin:0 12.5px;">Добавить новый элемент</div>
<div class="abs" style="left:721px;top:235px;width:170px;height:26px;border:1px solid #b3b3b3;border-radius:3px;background:linear-gradient(#ffffff,#ebebeb);box-shadow:0 1px 1px rgba(0,0,0,.22)"></div>
<div class="t" style="left:735.00px;top:240.60px;font-size:13px;line-height:16px;letter-spacing:-0.030px;color:#383838;transform:scaleY(1.06);transform-origin:0 12.5px;">Сгруппировать условия</div>
<div class="abs" style="left:911px;top:235px;width:76px;height:26px;border:1px solid #cfcfcf;border-radius:3px;background:linear-gradient(#ffffff,#f1f1f1);box-shadow:0 1px 1px rgba(0,0,0,.1)"></div>
<div class="t" style="left:925.00px;top:240.60px;font-size:13px;line-height:16px;letter-spacing:-0.350px;color:#a0a0a0;transform:scaleY(1.06);transform-origin:0 12.5px;">Удалить</div>
<div class="abs" style="left:1062px;top:235px;width:61px;height:26px;border:1px solid #b3b3b3;border-radius:3px;background:linear-gradient(#ffffff,#ebebeb);box-shadow:0 1px 1px rgba(0,0,0,.22)"></div>
<div class="t" style="left:1076.25px;top:240.60px;font-size:13px;line-height:16px;letter-spacing:0.125px;color:#383838;transform:scaleY(1.06);transform-origin:0 12.5px;">Еще</div>
<svg class="abs" style="left:1110px;top:247.6px;" width="8" height="5" viewBox="0 0 8 5"><path d="M0.8 0.8 H6.8 L3.8 4 Z" fill="#444"/></svg>
<div class="abs" style="left:523px;top:270px;width:600px;height:506px;border:1px solid #a8a8a8;background:#fff"></div>
<div class="abs" style="left:524px;top:271px;width:33px;height:31px;background:#f2f2f2;border:1px solid #fff"></div>
<div class="abs" style="left:557px;top:271px;width:1px;height:31px;background:#cfcfcf"></div>
<div class="abs" style="left:558px;top:271px;width:564px;height:31px;background:#f2f2f2;border:1px solid #fff"></div>
<div class="abs" style="left:524px;top:301px;width:598px;height:1px;background:#cfcfcf"></div>
<div class="abs" style="left:524px;top:303px;width:33px;height:26px;background:#ffe591"></div>
<div class="abs" style="left:558px;top:303px;width:564px;height:26px;background:#fff2c8"></div>
<div class="abs" style="left:524px;top:330px;width:598px;height:1px;background:#e0e0e0"></div>
<div class="t" style="left:566.25px;top:278.00px;font-size:13px;line-height:16px;letter-spacing:-0.204px;color:#383838;transform:scaleY(1.06);transform-origin:0 12.5px;">Представление</div>
<div class="t" style="left:587.50px;top:309.30px;font-size:13px;line-height:16px;letter-spacing:-0.562px;color:#383838;transform:scaleY(1.06);transform-origin:0 12.5px;">Отбор</div>
<div class="abs" style="left:769px;top:795px;width:213px;height:26px;border:1px solid #c4a200;border-radius:3px;background:linear-gradient(#ffe72a,#f2cf00);box-shadow:0 1px 1px rgba(0,0,0,.25)"></div>
<div class="t" style="left:783.00px;top:800.60px;font-size:13px;line-height:16px;letter-spacing:0.174px;font-weight:bold;color:#38383c;transform:scaleY(1.06);transform-origin:0 12.5px;">Завершить редактирование</div>
<div class="abs" style="left:991px;top:795px;width:73px;height:26px;border:1px solid #b3b3b3;border-radius:3px;background:linear-gradient(#ffffff,#ebebeb);box-shadow:0 1px 1px rgba(0,0,0,.22)"></div>
<div class="t" style="left:1005.00px;top:800.60px;font-size:13px;line-height:16px;letter-spacing:-0.480px;color:#383838;transform:scaleY(1.06);transform-origin:0 12.5px;">Отмена</div>
<div class="abs" style="left:1073px;top:795px;width:61px;height:26px;border:1px solid #b3b3b3;border-radius:3px;background:linear-gradient(#ffffff,#ebebeb);box-shadow:0 1px 1px rgba(0,0,0,.22)"></div>
<div class="t" style="left:1087.30px;top:800.60px;font-size:13px;line-height:16px;letter-spacing:0.250px;color:#383838;transform:scaleY(1.06);transform-origin:0 12.5px;">Еще</div>
<svg class="abs" style="left:1121px;top:807.7px;" width="8" height="5" viewBox="0 0 8 5"><path d="M0.8 0.8 H6.8 L3.8 4 Z" fill="#444"/></svg>
<div id="os-bottom" class="abs"></div>
</body>
</html>
